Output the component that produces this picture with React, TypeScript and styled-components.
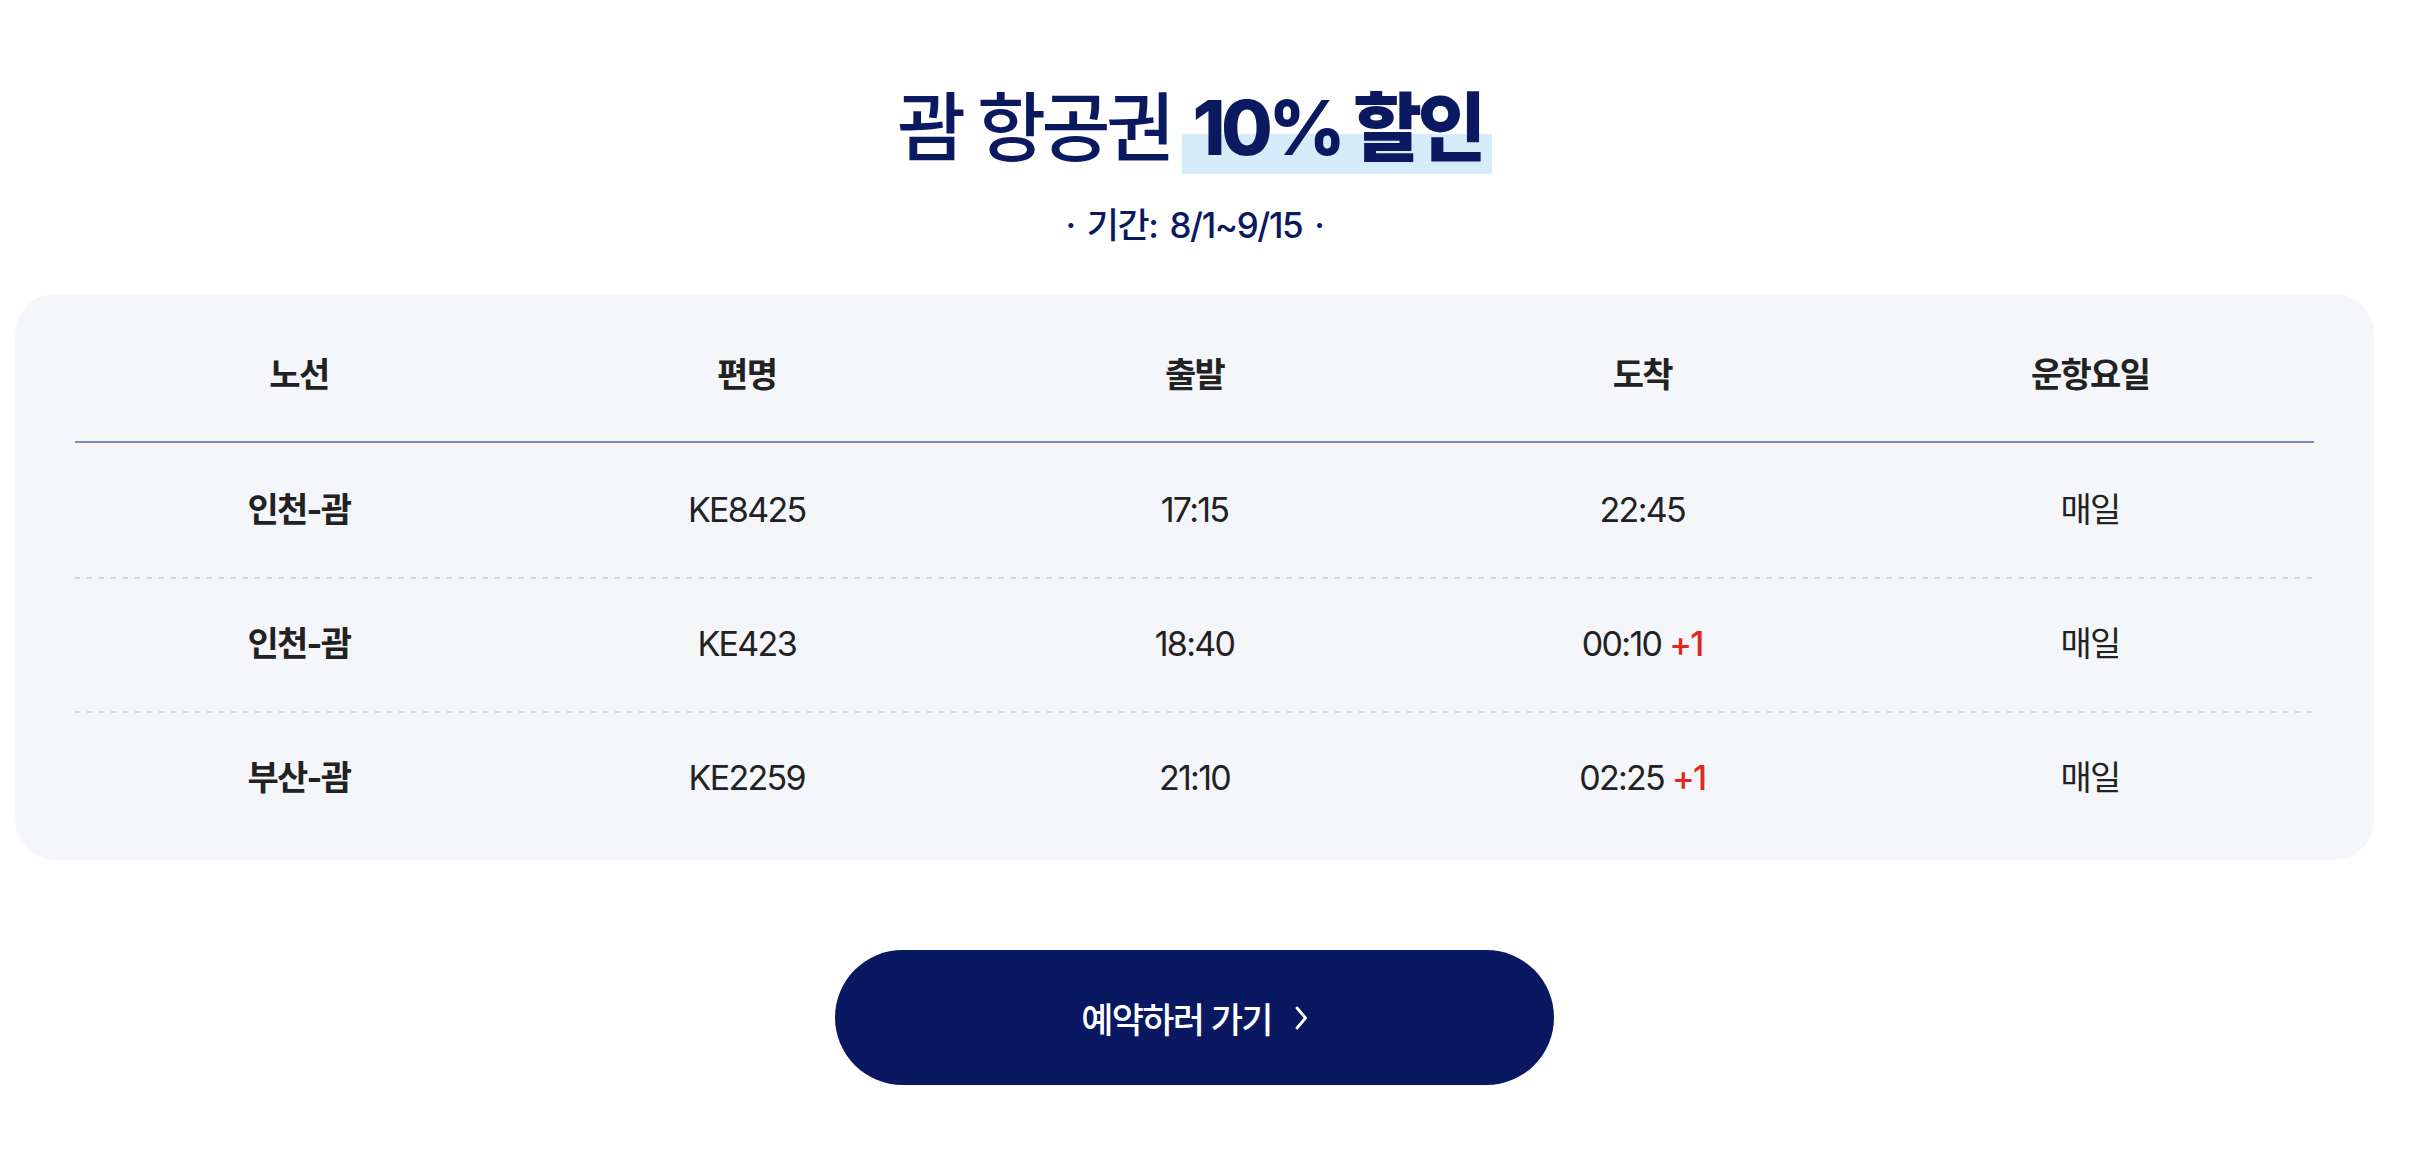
import React from "react";
import styled, { createGlobalStyle } from "styled-components";

const GlobalStyle = createGlobalStyle`
  html, body { margin: 0; padding: 0; background: #ffffff; }
  body { font-family: Inter, "Noto Sans CJK KR", sans-serif; }
`;

const NAVY = "#0b1960";

const Page = styled.div`
  width: 2359px;
  margin-left: 15px;
  display: flex;
  flex-direction: column;
  align-items: center;
  padding-top: 78px;
`;

const Title = styled.h1`
  margin: 0;
  font-family: Inter, "Noto Sans CJK KR", sans-serif;
  font-size: 75px;
  line-height: 100px;
  font-weight: 500;
  color: ${NAVY};
  letter-spacing: -0.06em;
  white-space: nowrap;
`;

const Highlight = styled.span`
  display: inline-block;
  font-weight: 800;
  padding: 0 10px;
  margin-left: 12px;
  background: linear-gradient(to bottom, transparent 56px, #d6ecfb 56px, #d6ecfb 96px, transparent 96px);
`;

const Period = styled.p`
  margin: 25px 0 0;
  font-size: 35px;
  line-height: 44px;
  font-weight: 500;
  color: ${NAVY};
  letter-spacing: -0.04em;
  word-spacing: 4px;
`;

const Card = styled.div`
  align-self: stretch;
  margin-top: 47px;
  background: #f5f6fa;
  border-radius: 40px;
  padding: 15px 60px;
`;

const Row = styled.div<{ $head?: boolean; $first?: boolean }>`
  display: grid;
  grid-template-columns: repeat(5, 1fr);
  align-items: center;
  height: 134px;
  box-sizing: border-box;
  border-bottom: ${(p) => (p.$head ? "2px solid #7d8fb0" : "none")};
  background-image: ${(p) =>
    p.$head || p.$first
      ? "none"
      : "repeating-linear-gradient(to right, #cdd6e5 0 5px, transparent 5px 12px)"};
  background-size: 100% 2px;
  background-repeat: no-repeat;
  background-position: top left;
`;

const Cell = styled.div<{ $bold?: boolean }>`
  text-align: center;
  font-size: 34px;
  line-height: 44px;
  color: #222222;
  font-weight: ${(p) => (p.$bold ? 700 : 400)};
  letter-spacing: -0.05em;
`;

const NextDay = styled.span`
  color: #e0281c;
  font-weight: 500;
  margin-left: 8px;
`;

const BookButton = styled.button`
  margin-top: 90px;
  width: 719px;
  height: 135px;
  border: none;
  border-radius: 68px;
  background: #0a1862;
  color: #ffffff;
  font-family: Inter, "Noto Sans CJK KR", sans-serif;
  font-size: 35px;
  font-weight: 500;
  letter-spacing: -0.05em;
  display: flex;
  align-items: center;
  justify-content: center;
  gap: 22px;
  cursor: pointer;
`;

const rows = [
  { route: "인천-괌", flight: "KE8425", dep: "17:15", arr: "22:45", plus: false, days: "매일" },
  { route: "인천-괌", flight: "KE423", dep: "18:40", arr: "00:10", plus: true, days: "매일" },
  { route: "부산-괌", flight: "KE2259", dep: "21:10", arr: "02:25", plus: true, days: "매일" },
];

export default function App() {
  return (
    <>
      <GlobalStyle />
      <Page>
        <Title>
          괌 항공권<Highlight>10% 할인</Highlight>
        </Title>
        <Period>· 기간: 8/1~9/15 ·</Period>
        <Card>
          <Row $head>
            <Cell $bold>노선</Cell>
            <Cell $bold>편명</Cell>
            <Cell $bold>출발</Cell>
            <Cell $bold>도착</Cell>
            <Cell $bold>운항요일</Cell>
          </Row>
          {rows.map((r, i) => (
            <Row key={i} $first={i === 0}>
              <Cell $bold>{r.route}</Cell>
              <Cell>{r.flight}</Cell>
              <Cell>{r.dep}</Cell>
              <Cell>
                {r.arr}
                {r.plus && <NextDay>+1</NextDay>}
              </Cell>
              <Cell>{r.days}</Cell>
            </Row>
          ))}
        </Card>
        <BookButton>
          예약하러 가기
          <svg width="14" height="28" viewBox="0 0 14 28" fill="none">
            <path d="M3 4 L11.5 14 L3 24" stroke="#ffffff" strokeWidth="2.8" strokeLinecap="round" strokeLinejoin="round" />
          </svg>
        </BookButton>
      </Page>
    </>
  );
}
